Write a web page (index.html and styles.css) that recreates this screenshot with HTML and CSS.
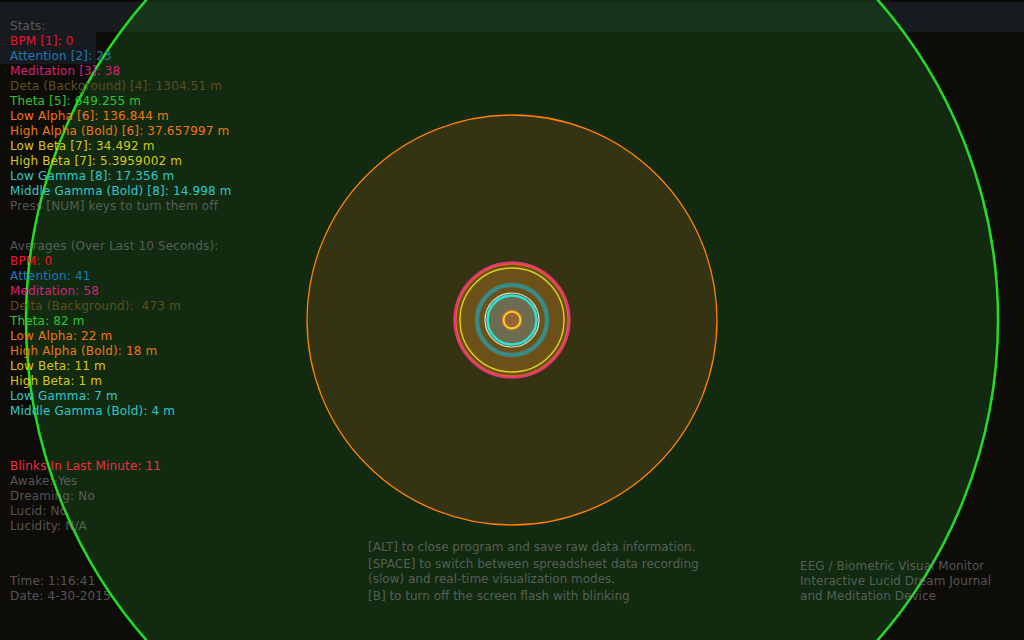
FILE: index.html
```html
<!DOCTYPE html>
<html lang="en">
<head>
<meta charset="utf-8">
<title>EEG / Biometric Visual Monitor</title>
<link rel="stylesheet" href="styles.css">
</head>
<body>
<div class="screen">
  <svg class="viz" width="1024" height="640" viewBox="0 0 1024 640" aria-hidden="true">
    <defs>
      <clipPath id="bigc"><circle cx="512" cy="320" r="486"/></clipPath>
    </defs>
    <rect width="1024" height="640" fill="#0e0c09"/>
    <rect x="0" y="2" width="1024" height="30" fill="#171b1f"/>
    <rect x="0" y="32" width="96" height="32" fill="#171b1f"/>
    <circle cx="512" cy="320" r="486" fill="#112a10"/>
    <rect x="0" y="2" width="1024" height="30" fill="#163419" clip-path="url(#bigc)"/>
    <circle cx="512" cy="320" r="486" fill="none" stroke="#22dd22" stroke-width="2.5"/>
    <circle cx="512" cy="320" r="205" fill="#353412" stroke="#ff8000" stroke-width="1.3"/>
    <circle cx="512" cy="320" r="57.5" fill="#6c5118" stroke="#e4357e" stroke-width="2.2"/>
    <circle cx="512" cy="320" r="56" fill="none" stroke="#f25a35" stroke-width="1.3"/>
    <circle cx="512" cy="320" r="52" fill="none" stroke="#e0d020" stroke-width="1.4"/>
    <circle cx="512" cy="320" r="35" fill="none" stroke="#3a8a88" stroke-width="4.5"/>
    <circle cx="512" cy="320" r="27" fill="none" stroke="#c8ead8" stroke-width="1.2"/>
    <circle cx="512" cy="320" r="24.5" fill="#6e6c4e" stroke="#2ee0d8" stroke-width="2.6"/>
    <circle cx="512" cy="320" r="9.5" fill="#8a6838" stroke="#f06040" stroke-width="1.4"/>
    <circle cx="512" cy="320" r="8.3" fill="none" stroke="#e8d820" stroke-width="2"/>
    <circle cx="512" cy="320" r="5" fill="none" stroke="#d85040" stroke-width="1"/>
  </svg>

  <div class="hud">
    <section class="block stats">
      <div class="muted">Stats:</div>
      <div class="c-bpm">BPM [1]: 0</div>
      <div class="c-att">Attention [2]: 23</div>
      <div class="c-med">Meditation [3]: 38</div>
      <div class="c-delta">Deta (Background) [4]: 1304.51 m</div>
      <div class="c-theta">Theta [5]: 649.255 m</div>
      <div class="c-alpha">Low Alpha [6]: 136.844 m</div>
      <div class="c-alpha">High Alpha (Bold) [6]: 37.657997 m</div>
      <div class="c-beta">Low Beta [7]: 34.492 m</div>
      <div class="c-beta">High Beta [7]: 5.3959002 m</div>
      <div class="c-gamma">Low Gamma [8]: 17.356 m</div>
      <div class="c-gamma">Middle Gamma (Bold) [8]: 14.998 m</div>
      <div class="muted">Press [NUM] keys to turn them off</div>
    </section>

    <section class="block averages">
      <div class="muted">Averages (Over Last 10 Seconds):</div>
      <div class="c-bpm">BPM: 0</div>
      <div class="c-att">Attention: 41</div>
      <div class="c-med">Meditation: 58</div>
      <div class="c-delta">Delta (Background): &nbsp;473 m</div>
      <div class="c-theta">Theta: 82 m</div>
      <div class="c-alpha">Low Alpha: 22 m</div>
      <div class="c-alpha">High Alpha (Bold): 18 m</div>
      <div class="c-beta">Low Beta: 11 m</div>
      <div class="c-beta">High Beta: 1 m</div>
      <div class="c-gamma">Low Gamma: 7 m</div>
      <div class="c-gamma">Middle Gamma (Bold): 4 m</div>
    </section>

    <section class="block status">
      <div class="c-blink">Blinks In Last Minute: 11</div>
      <div class="muted">Awake: Yes</div>
      <div class="muted">Dreaming: No</div>
      <div class="muted">Lucid: No</div>
      <div class="muted">Lucidity: N/A</div>
    </section>

    <footer class="bottom">
      <div class="clock muted">
        <div>Time: 1:16:41</div>
        <div>Date: 4-30-2015</div>
      </div>
      <div class="help muted">
        <p>[ALT] to close program and save raw data information.</p>
        <p class="p2">[SPACE] to switch between spreadsheet data recording<br>(slow) and real-time visualization modes.</p>
        <p class="p3">[B] to turn off the screen flash with blinking</p>
      </div>
      <div class="about muted">
        <div>EEG / Biometric Visual Monitor</div>
        <div>Interactive Lucid Dream Journal</div>
        <div>and Meditation Device</div>
      </div>
    </footer>
  </div>
</div>
</body>
</html>
```

FILE: styles.css
```css
html, body {
  margin: 0;
  padding: 0;
  background: #0e0c09;
}

.screen {
  position: relative;
  width: 1024px;
  height: 640px;
  overflow: hidden;
  font-family: "DejaVu Sans", Verdana, sans-serif;
  font-size: 12px;
  line-height: 15px;
}

.viz {
  position: absolute;
  left: 0;
  top: 0;
  display: block;
}

.hud {
  position: relative;
  height: 640px;
  box-sizing: border-box;
  padding: 19px 0 36px 10px;
  display: flex;
  flex-direction: column;
}

.block {
  white-space: nowrap;
  letter-spacing: 0.15px;
}

.averages {
  margin-top: 25px;
}

.status {
  margin-top: 40px;
}

.bottom {
  margin-top: auto;
  display: grid;
  grid-template-columns: 358px 432px 1fr;
  align-items: end;
  white-space: nowrap;
}

.clock {
  letter-spacing: 0.15px;
}

.about {
  letter-spacing: 0.05px;
}

.help p {
  margin: 0;
}

.help .p2 {
  margin-top: 2px;
}

.help .p3 {
  margin-top: 2px;
}

.muted { color: rgba(132, 132, 132, 0.62); }
.c-bpm { color: #ee1133; }
.c-att { color: #1b7ab6; }
.c-med { color: #d8207e; }
.c-delta { color: #5e4f1f; }
.c-theta { color: #2ec62e; }
.c-alpha { color: #ee7712; }
.c-beta { color: #d6c814; }
.c-gamma { color: #30c8c8; }
.c-blink { color: #ec3044; }
```
